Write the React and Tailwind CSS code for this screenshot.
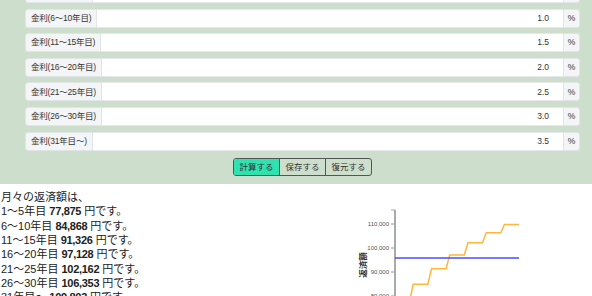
import React from 'react';

const rates = [
  { label: '金利(1～5年目)', value: '0.5' },
  { label: '金利(6～10年目)', value: '1.0' },
  { label: '金利(11～15年目)', value: '1.5' },
  { label: '金利(16～20年目)', value: '2.0' },
  { label: '金利(21～25年目)', value: '2.5' },
  { label: '金利(26～30年目)', value: '3.0' },
  { label: '金利(31年目～)', value: '3.5' },
];

const results = [
  { span: '1～5年目', amount: '77,875' },
  { span: '6～10年目', amount: '84,868' },
  { span: '11～15年目', amount: '91,326' },
  { span: '16～20年目', amount: '97,128' },
  { span: '21～25年目', amount: '102,162' },
  { span: '26～30年目', amount: '106,353' },
  { span: '31年目～', amount: '109,803' },
];

const monthly = [77875, 84868, 91326, 97128, 102162, 106353, 109803];

function RateRow({ label, value }) {
  return (
    <div className="flex h-[19px] text-[8.5px] text-[#333]">
      <span className="flex items-center px-[5px] bg-[#f4f5f6] border border-[#e1e4e8] rounded-l-[3px] whitespace-nowrap tracking-[-0.2px]">
        {label}
      </span>
      <span className="flex-1 flex items-center justify-end pr-[14px] bg-white border-y border-[#e6e8eb]">
        {value}
      </span>
      <span className="w-[17px] flex items-center justify-center bg-[#f4f5f6] border border-[#e1e4e8] rounded-r-[3px]">
        %
      </span>
    </div>
  );
}

function Chart() {
  const x = (i) => 55 + i * 3.647;
  const y = (v) => 48 - (v - 100000) * 0.0024;
  const pts = [];
  for (let i = 0; i < 35; i++) {
    pts.push(`${x(i).toFixed(1)},${y(monthly[Math.floor(i / 5)]).toFixed(1)}`);
  }
  const ticks = [
    { v: 110000, t: '110,000' },
    { v: 100000, t: '100,000' },
    { v: 90000, t: '90,000' },
    { v: 80000, t: '80,000' },
  ];
  return (
    <svg width="252" height="130" className="mt-[16px] shrink-0">
      <line x1="55" y1="10" x2="55" y2="130" stroke="#aaa" strokeWidth="2" />
      <line x1="51" y1="10" x2="55" y2="10" stroke="#aaa" strokeWidth="1" />
      {ticks.map((k) => (
        <g key={k.t}>
          <line x1="51" y1={y(k.v)} x2="55" y2={y(k.v)} stroke="#999" strokeWidth="1" />
          <text x="49" y={y(k.v) + 2} fontSize="6" fill="#555" textAnchor="end">
            {k.t}
          </text>
        </g>
      ))}
      <text
        x="0"
        y="0"
        fontSize="8.5"
        fontWeight="bold"
        fill="#333"
        textAnchor="middle"
        transform="translate(26,65) rotate(-90)"
      >
        返済額
      </text>
      <polyline points={pts.join(' ')} fill="none" stroke="#ffb73b" strokeWidth="1.5" />
      <line x1="55" y1="58" x2="179" y2="58" stroke="#4d4dff" strokeWidth="1.5" />
    </svg>
  );
}

export default function App() {
  return (
    <div className="w-[592px] h-[296px] overflow-hidden bg-white font-['Liberation_Sans','Noto_Sans_CJK_JP',sans-serif]">
      <div className="bg-[#cddecd] pb-[8px] pl-[25px] pr-[12px]">
        <div className="-mt-[16px] flex flex-col gap-[5.6px]">
          {rates.map((r) => (
            <RateRow key={r.label} label={r.label} value={r.value} />
          ))}
        </div>
        <div className="flex justify-center mt-[7.5px]">
          <div className="flex h-[18px] text-[8.5px] text-[#333] border border-[#555] rounded-[3px] overflow-hidden">
            <button className="px-[5.5px] bg-[#2ee3b0]">計算する</button>
            <button className="px-[5.5px] border-l border-[#555]">保存する</button>
            <button className="px-[5.5px] border-l border-[#555]">復元する</button>
          </div>
        </div>
      </div>
      <div className="flex">
        <div className="w-[340px] pt-[6px] pl-[1px] text-[11px] leading-[14.3px] text-[#222]">
          <p>月々の返済額は、</p>
          {results.map((r) => (
            <p key={r.span}>
              {r.span} <b className="tracking-[-0.3px]">{r.amount}</b> 円です。
            </p>
          ))}
        </div>
        <Chart />
      </div>
    </div>
  );
}
